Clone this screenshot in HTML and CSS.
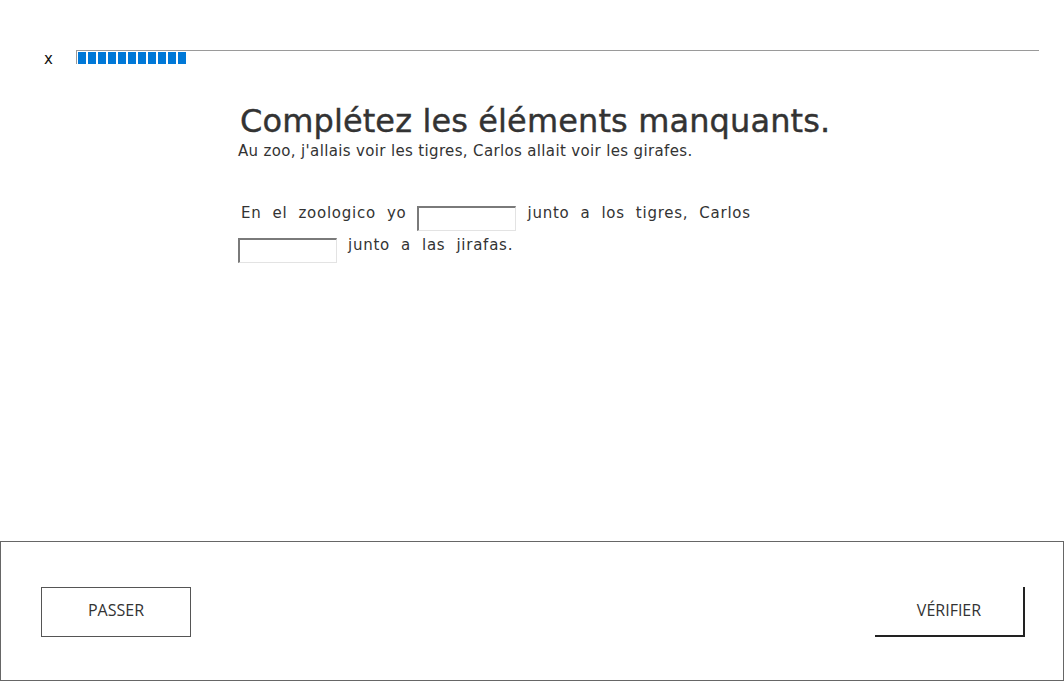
FILE: index.html
```html
<!DOCTYPE html>
<html lang="fr">
<head>
<meta charset="utf-8">
<title>Exercice</title>
<link rel="stylesheet" href="styles.css">
</head>
<body>
<div class="page">
  <header class="top">
    <span class="close">x</span>
    <div class="progress">
      <span class="seg"></span><span class="seg"></span><span class="seg"></span><span class="seg"></span>
      <span class="seg"></span><span class="seg"></span><span class="seg"></span><span class="seg"></span>
      <span class="seg"></span><span class="seg"></span><span class="seg"></span>
    </div>
  </header>
  <main class="main">
    <h1 class="title">Complétez les éléments manquants.</h1>
    <p class="subtitle">Au zoo, j'allais voir les tigres, Carlos allait voir les girafes.</p>
    <p class="sentence">En el zoologico yo <input class="blank" type="text"> junto a los tigres, Carlos <input class="blank" type="text"> junto a las jirafas.</p>
  </main>
  <footer class="footer">
    <button class="btn btn-skip">PASSER</button>
    <button class="btn btn-check">VÉRIFIER</button>
  </footer>
</div>
</body>
</html>
```
FILE: styles.css
```css
html, body {
  margin: 0;
  padding: 0;
  background: #fff;
}
body {
  font-family: "DejaVu Sans", sans-serif;
  color: #333;
}
.page {
  display: flex;
  flex-direction: column;
  height: 681px;
}
.top {
  display: flex;
  align-items: flex-start;
  padding: 50px 25px 0 44px;
}
.close {
  width: 32px;
  font-size: 15px;
  line-height: 15px;
  margin-top: 2px;
  color: #111;
}
.progress {
  flex: 1;
  display: flex;
  gap: 2px;
  height: 14px;
  box-sizing: border-box;
  border-top: 1px solid #9a9a9a;
  border-left: 1px solid #9a9a9a;
  padding: 1px 0 0 1px;
}
.seg {
  width: 8px;
  height: 12px;
  background: #0078d7;
}
.main {
  flex: 1;
  padding: 0 0 0 238px;
}
.title {
  margin: 35px 0 0 2px;
  font-size: 32px;
  font-weight: normal;
  line-height: 38px;
  letter-spacing: 0.12px;
  color: #333;
  -webkit-text-stroke: 0.4px #333;
}
.subtitle {
  margin: 1px 0 0;
  font-size: 15px;
  line-height: 20px;
  letter-spacing: 0.35px;
}
.sentence {
  width: 530px;
  margin: 38px 0 0;
  font-size: 15px;
  line-height: 28px;
  letter-spacing: 0.75px;
  word-spacing: 5.5px;
}
.sentence:first-letter {
  margin-left: 3px;
}
.blank {
  width: 99px;
  height: 25px;
  box-sizing: border-box;
  margin: 0;
  padding: 0 3px;
  border-style: solid;
  border-color: #7a7a7a #e3e3e3 #e3e3e3 #7a7a7a;
  border-width: 2px 1px 1px 2px;
  vertical-align: -6px;
  font: inherit;
  letter-spacing: normal;
  background: #fff;
}
.footer {
  height: 140px;
  box-sizing: border-box;
  border: 1px solid #666;
  display: flex;
  justify-content: space-between;
  align-items: flex-start;
  padding: 45px 38px 0 40px;
}
.btn {
  width: 150px;
  height: 50px;
  box-sizing: border-box;
  background: #fff;
  font-family: "Open Sans", sans-serif;
  font-size: 16px;
  color: #333;
  padding: 0 0 4px;
  margin: 0;
}
.btn-skip {
  border: 1px solid #555;
}
.btn-check {
  border: none;
  border-right: 2px solid #222;
  border-bottom: 2px solid #222;
  padding-bottom: 2px;
}
```
